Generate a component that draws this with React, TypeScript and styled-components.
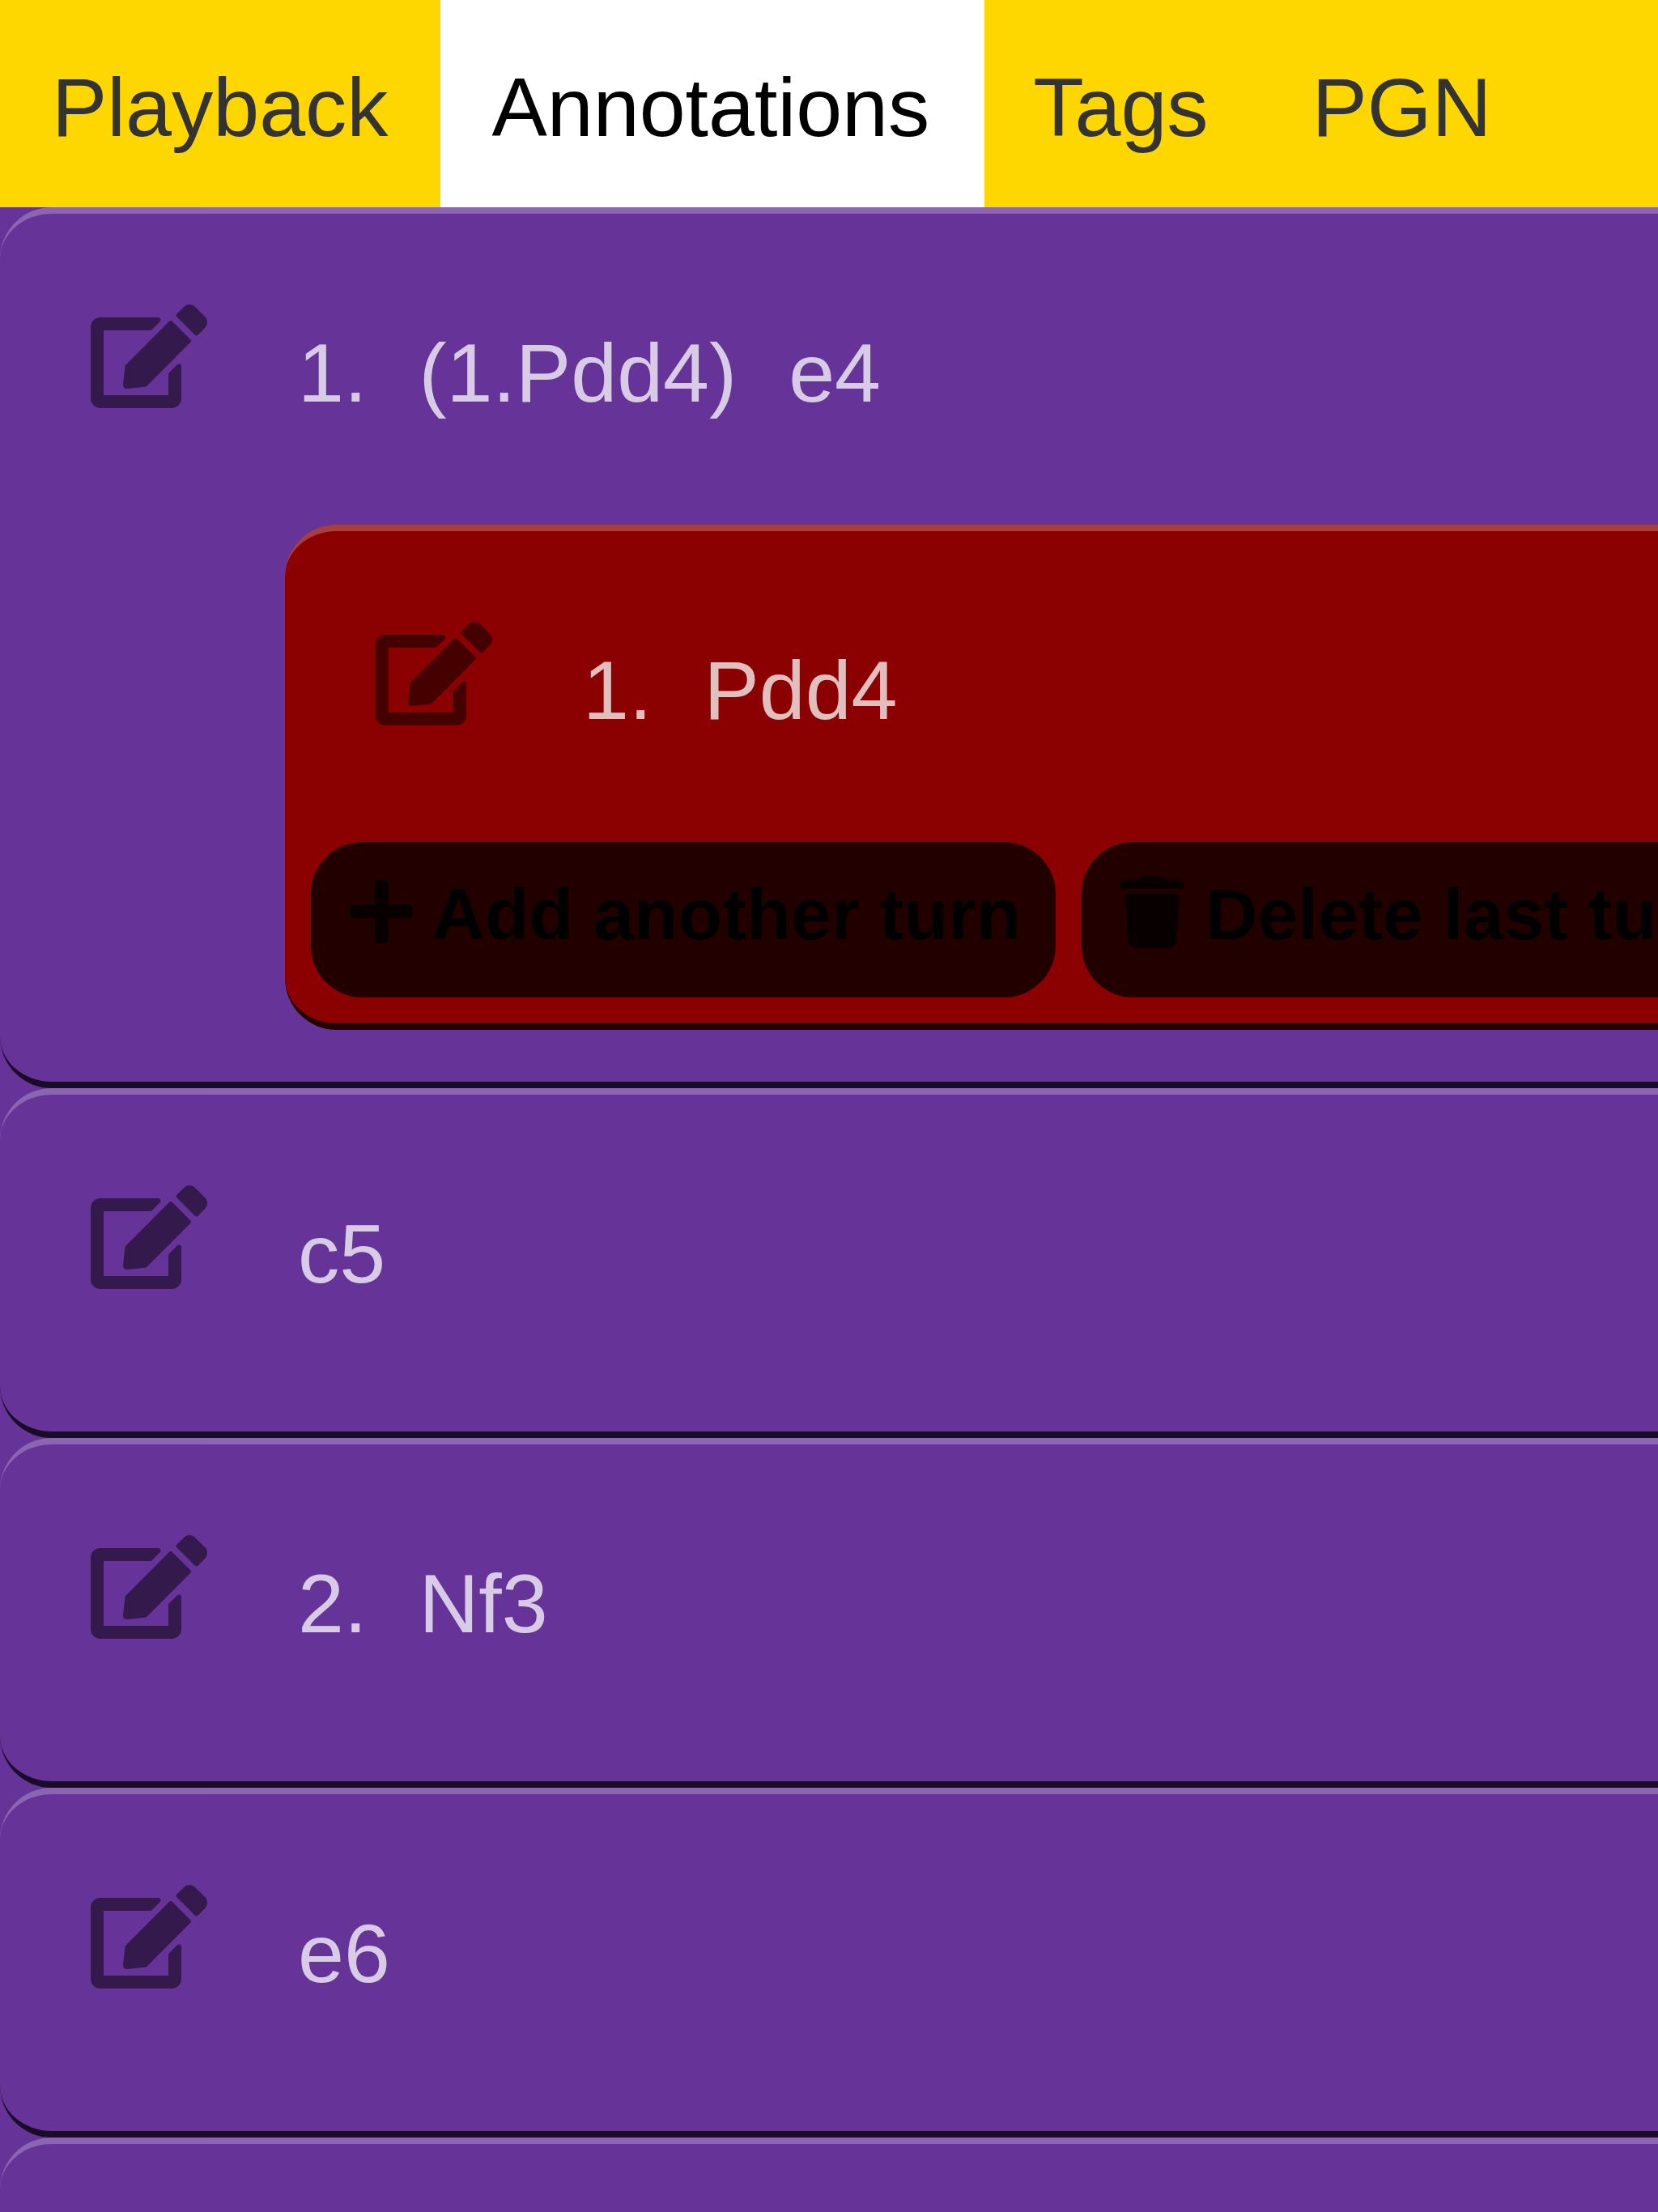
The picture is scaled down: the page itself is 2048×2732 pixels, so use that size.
import React from "react";
import styled, { createGlobalStyle } from "styled-components";
import { FaEdit, FaPlus, FaTrash } from "react-icons/fa";

const GlobalStyle = createGlobalStyle`
  body {
    margin: 0;
    background: #663399;
  }
  *, *::before, *::after {
    box-sizing: border-box;
  }
`;

const Page = styled.div`
  height: 2732px;
  overflow: hidden;
  background: #663399;
  color: rgba(255, 255, 255, 0.75);
  font-family: "Liberation Sans", Arial, Helvetica, sans-serif;
  font-size: 102.4px;
  line-height: 129px;
`;

const TabBar = styled.nav`
  display: flex;
  height: 256px;
  background: #ffd700;
`;

const Tab = styled.a<{ $active?: boolean }>`
  flex: none;
  height: 256px;
  padding: 68px 64px 0;
  color: ${(p) => (p.$active ? "#000" : "#333")};
  background: ${(p) => (p.$active ? "#fff" : "transparent")};
  ${(p) =>
    p.$active ? "width: 672px; margin: 0 -3.8px 0 0.6px; padding-left: 63.4px;" : ""}
`;

const TurnList = styled.main`
  display: flex;
  flex-direction: column;
  align-items: flex-start;
`;

const Turn = styled.section<{ $variation?: boolean }>`
  flex: none;
  width: 2560px;
  padding-bottom: 32px;
  border: 0 solid transparent;
  border-top: 8px solid rgba(255, 255, 255, 0.25);
  border-bottom: 8px solid rgba(0, 0, 0, 0.75);
  border-radius: 64px;
  background: ${(p) => (p.$variation ? "#8b0000" : "#663399")};
  ${(p) => (p.$variation ? "margin: 0 0 32px 352px;" : "")}
`;

const TurnHeader = styled.header`
  display: flex;
  align-items: flex-start;
  height: 384px;
  padding: 112px 0 0 112px;
`;

const EditIcon = styled(FaEdit)`
  flex: none;
  width: 144px;
  height: 128px;
  margin-right: 112px;
  color: rgba(0, 0, 0, 0.5);
`;

const Moves = styled.div`
  display: flex;
  gap: 64px;
  padding-top: 20px;
  white-space: nowrap;
`;

const Actions = styled.div`
  display: flex;
  gap: 32px;
  padding-left: 32px;
`;

const ActionButton = styled.button<{ $width: number; $gap: number }>`
  flex: none;
  display: flex;
  align-items: flex-start;
  gap: ${(p) => p.$gap}px;
  width: ${(p) => p.$width}px;
  height: 192px;
  margin: 0;
  padding: 39px 0 0 48px;
  border: 0;
  border-radius: 64px;
  background: rgba(0, 0, 0, 0.75);
  color: #000;
  font: bold 89.6px / 100px "Liberation Sans", Arial, Helvetica, sans-serif;
  white-space: nowrap;

  svg {
    flex: none;
    width: 78.4px;
    height: 89.6px;
    margin-top: 2.4px;
    color: rgba(0, 0, 0, 0.75);
  }
`;

const tabs = ["Playback", "Annotations", "Tags", "PGN"];

function Header({ moves }: { moves: string[] }) {
  return (
    <TurnHeader>
      <EditIcon />
      <Moves>
        {moves.map((move) => (
          <span key={move}>{move}</span>
        ))}
      </Moves>
    </TurnHeader>
  );
}

export default function App() {
  return (
    <>
      <GlobalStyle />
      <Page>
        <TabBar>
          {tabs.map((tab) => (
            <Tab key={tab} $active={tab === "Annotations"}>
              {tab}
            </Tab>
          ))}
        </TabBar>
        <TurnList>
          <Turn>
            <Header moves={["1.", "(1.Pdd4)", "e4"]} />
            <Turn $variation>
              <Header moves={["1.", "Pdd4"]} />
              <Actions>
                <ActionButton $width={920} $gap={23.6}>
                  <FaPlus />
                  <span>Add another turn</span>
                </ActionButton>
                <ActionButton $width={880} $gap={26.4}>
                  <FaTrash />
                  <span>Delete last turn</span>
                </ActionButton>
              </Actions>
            </Turn>
          </Turn>
          <Turn>
            <Header moves={["c5"]} />
          </Turn>
          <Turn>
            <Header moves={["2.", "Nf3"]} />
          </Turn>
          <Turn>
            <Header moves={["e6"]} />
          </Turn>
          <Turn>
            <Header moves={[]} />
          </Turn>
        </TurnList>
      </Page>
    </>
  );
}
